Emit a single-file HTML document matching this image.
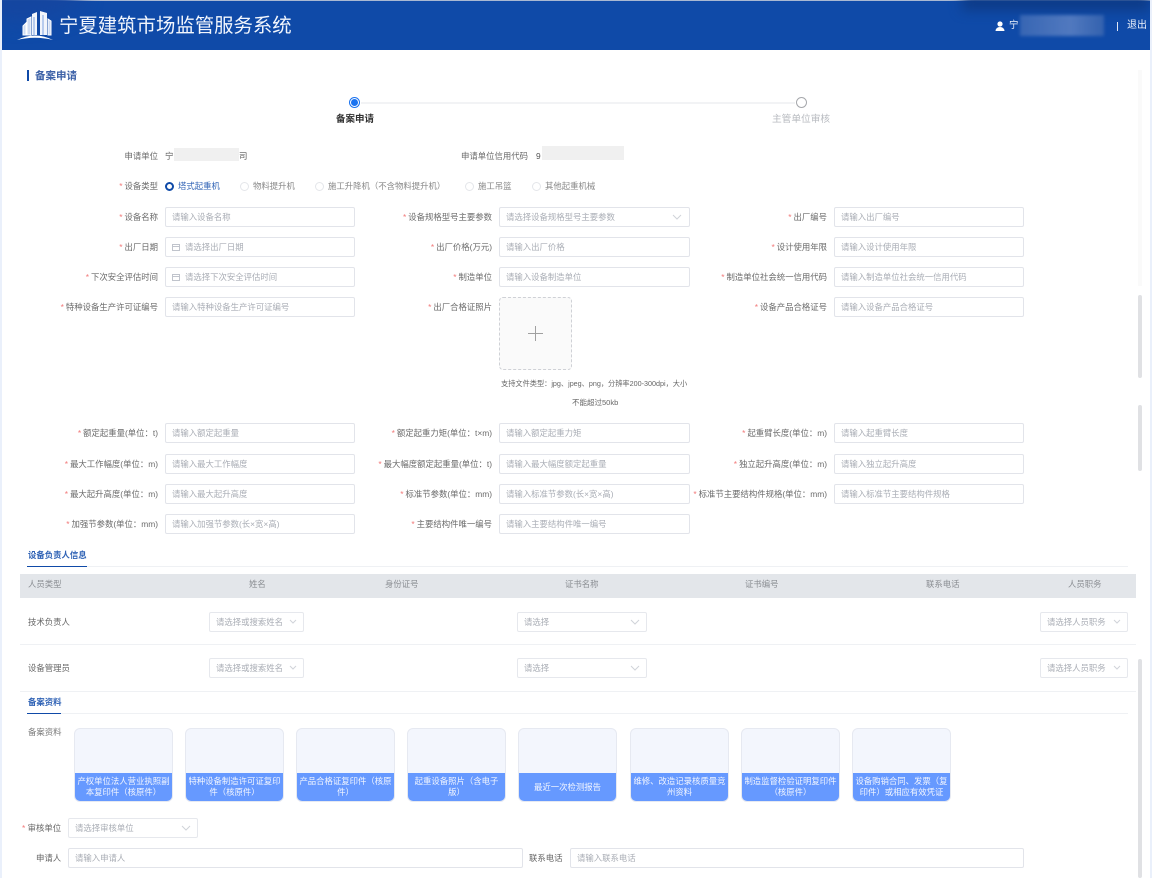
<!DOCTYPE html>
<html lang="zh"><head><meta charset="utf-8"><title>备案申请</title>
<style>
*{box-sizing:border-box}
html,body{margin:0;padding:0;width:1152px;height:878px;overflow:hidden;background:#fff}
body{position:relative;font-family:"Liberation Sans","Noto Sans CJK SC",sans-serif;font-size:8.4px;color:#666;filter:blur(.35px)}
.a{position:absolute;white-space:nowrap;line-height:12px}
.l{position:absolute;white-space:nowrap;text-align:right;width:220px;line-height:20px;color:#6a6a6a}
.l1{left:-62px}.l2{left:272px}.l3{left:607px}
.l i{font-style:normal;color:#f27a7a;margin-right:2px}
.f{position:absolute;height:20px;border:1px solid #e2e4ea;border-radius:2px;background:#fff;color:#a9adb5;line-height:18px;padding-left:6px;white-space:nowrap;overflow:hidden}
.c1{left:165px;width:190px}.c2{left:499px;width:191px}.c3{left:834px;width:190px}
.d{padding-left:19px}
.d svg{position:absolute;left:6px;top:5px}
.sel{position:absolute;height:20px;border:1px solid #e6e8ed;border-radius:2px;background:#fff;color:#a9adb5;line-height:18px;padding-left:6px;white-space:nowrap}
.sel svg{position:absolute;right:6px;top:6px}
.hr{position:absolute;height:1px;background:#eff1f4}
.card{position:absolute;top:728px;width:99px;height:74px;border:1px solid #e6e9f1;border-radius:6px;background:#f3f6fd;overflow:hidden}
.card div{position:absolute;left:0;right:0;bottom:0;height:28px;background:#6699ff;color:#f3f6ff;font-size:8.4px;line-height:10.5px;text-align:center;padding:3px 2px 0}
.card div.one{padding-top:8.5px}
.r{position:absolute;width:9px;height:9px;border:1px solid #e4e6ea;border-radius:50%;top:182px;background:#fff}
.sb{position:absolute;left:1138px;width:4px;background:#e0e1e4;border-radius:2px}
.th{position:absolute;top:578px;line-height:12px;color:#8a8d92;text-align:center;white-space:nowrap}
</style></head><body>
<div style="position:absolute;left:0;top:0;width:2px;height:878px;background:#eaf0fb"></div>
<div style="position:absolute;left:1150px;top:0;width:2px;height:878px;background:#eaf0fb"></div>
<div style="position:absolute;left:2px;top:0;width:1148px;height:50px;background:#0f4aa8;overflow:hidden">
  <div style="position:absolute;left:0;top:0;right:0;height:1px;background:#a9b8d2"></div>
  <div style="position:absolute;left:-40px;top:-30px;width:120px;height:50px;background:#1546a0;border-radius:50%;filter:blur(10px)"></div>
  <div style="position:absolute;left:960px;top:-6px;width:188px;height:16px;background:#0d3a85;filter:blur(6px)"></div>
  <svg style="position:absolute;left:14px;top:9px" width="42" height="34" viewBox="0 0 42 34">
    <path d="M16 5 l5-2 v23 h-5z M24 2 l7 2 v22 h-7z" fill="#fff" opacity=".95"/>
    <path d="M11 10 l4-2 v18 h-4z M32 10 l3 2 v14 h-3z M7 17 l3-3 v12 h-3z" fill="#cfdcf3" stroke="#fff" stroke-width="1"/>
    <path d="M18 8v18M27 6v20" stroke="#7fa3e0" stroke-width="1"/>
    <path d="M1 31 Q19 22 37 31 Q19 26.5 1 31z" fill="#fff"/>
  </svg>
  <div class="a" style="left:57px;top:14px;font-size:19.4px;line-height:24px;color:#f2f6fd">宁夏建筑市场监管服务系统</div>
  <svg style="position:absolute;left:993px;top:21px" width="10" height="10" viewBox="0 0 10 10"><circle cx="5" cy="3" r="2.6" fill="#fff"/><path d="M0.5 10 Q1 6 5 6 Q9 6 9.500 10z" fill="#fff"/></svg>
  <div class="a" style="left:1007px;top:20px;color:#eef3fc;font-size:9.500px">宁</div>
  <div style="position:absolute;left:1018px;top:15px;width:84px;height:21px;background:linear-gradient(90deg,#3f6bb6,#5d82c4 60%,#3a66b0);opacity:.85;filter:blur(1.500px)"></div>
  <div style="position:absolute;left:1115px;top:22px;width:1px;height:9px;background:#dfe7f5"></div>
  <div class="a" style="left:1125px;top:20px;color:#eef3fc;font-size:10px">退出</div>
</div>

<div style="position:absolute;left:27px;top:70px;width:2px;height:11px;background:#0f4aa8"></div>
<div class="a" style="left:35px;top:70px;font-size:10.500px;font-weight:bold;color:#3d62a8">备案申请</div>

<div style="position:absolute;left:349px;top:97px;width:11px;height:11px;border-radius:50%;border:1px solid #1a73f0;background:#fff"></div>
<div style="position:absolute;left:351px;top:99px;width:7px;height:7px;border-radius:50%;background:#1a73f0"></div>
<div style="position:absolute;left:361px;top:102px;width:434px;height:2px;background:#f2f3f5"></div>
<div style="position:absolute;left:796px;top:97px;width:11px;height:11px;border-radius:50%;border:1px solid #a6a8ac;background:#fff"></div>
<div class="a" style="left:336px;top:114px;font-size:9.500px;color:#333;font-weight:bold">备案申请</div>
<div class="a" style="left:772px;top:114px;font-size:9.700px;color:#b8bbc0">主管单位审核</div>

<div class="l l1" style="top:146px">申请单位</div>
<div class="a" style="left:165px;top:150px;color:#555">宁</div>
<div style="position:absolute;left:174px;top:148px;width:65px;height:13px;background:#f0f0f0"></div>
<div class="a" style="left:239px;top:150px;color:#555">司</div>
<div class="l" style="left:308px;top:146px">申请单位信用代码</div>
<div class="a" style="left:536px;top:150px;color:#555">9</div>
<div style="position:absolute;left:542px;top:146px;width:82px;height:14px;background:#f0f0f0"></div>

<div class="l l1" style="top:176px"><i>*</i>设备类型</div>
<div style="position:absolute;left:165px;top:182px;width:9px;height:9px;border-radius:50%;border:2.500px solid #0f4aa8;background:#fff"></div>
<div class="a" style="left:178px;top:180px;color:#2f62b5">塔式起重机</div>
<div class="r" style="left:240px"></div><div class="a" style="left:253px;top:180px;color:#888">物料提升机</div>
<div class="r" style="left:315px"></div><div class="a" style="left:328px;top:180px;color:#888">施工升降机（不含物料提升机）</div>
<div class="r" style="left:465px"></div><div class="a" style="left:478px;top:180px;color:#888">施工吊篮</div>
<div class="r" style="left:532px"></div><div class="a" style="left:545px;top:180px;color:#888">其他起重机械</div>

<div class="l l1" style="top:207px"><i>*</i>设备名称</div><div class="f c1" style="top:207px">请输入设备名称</div>
<div class="l l2" style="top:207px"><i>*</i>设备规格型号主要参数</div>
<div class="f c2" style="top:207px">请选择设备规格型号主要参数<svg style="position:absolute;right:7px;top:6px" width="10" height="6" viewBox="0 0 10 6"><path d="M1 1l4 4 4-4" fill="none" stroke="#d0d3d9"/></svg></div>
<div class="l l3" style="top:207px"><i>*</i>出厂编号</div><div class="f c3" style="top:207px">请输入出厂编号</div>

<div class="l l1" style="top:237px"><i>*</i>出厂日期</div>
<div class="f c1 d" style="top:237px"><svg width="8" height="8" viewBox="0 0 8 8"><path d="M.5 1.500h7v6h-7zM.5 3.500h7" fill="none" stroke="#c0c4cc"/></svg>请选择出厂日期</div>
<div class="l l2" style="top:237px"><i>*</i>出厂价格(万元)</div><div class="f c2" style="top:237px">请输入出厂价格</div>
<div class="l l3" style="top:237px"><i>*</i>设计使用年限</div><div class="f c3" style="top:237px">请输入设计使用年限</div>

<div class="l l1" style="top:267px"><i>*</i>下次安全评估时间</div>
<div class="f c1 d" style="top:267px"><svg width="8" height="8" viewBox="0 0 8 8"><path d="M.5 1.500h7v6h-7zM.5 3.500h7" fill="none" stroke="#c0c4cc"/></svg>请选择下次安全评估时间</div>
<div class="l l2" style="top:267px"><i>*</i>制造单位</div><div class="f c2" style="top:267px">请输入设备制造单位</div>
<div class="l l3" style="top:267px"><i>*</i>制造单位社会统一信用代码</div><div class="f c3" style="top:267px">请输入制造单位社会统一信用代码</div>

<div class="l l1" style="top:297px"><i>*</i>特种设备生产许可证编号</div><div class="f c1" style="top:297px">请输入特种设备生产许可证编号</div>
<div class="l l2" style="top:297px"><i>*</i>出厂合格证照片</div>
<div style="position:absolute;left:499px;top:297px;width:73px;height:73px;border:1px dashed #cfd1d6;border-radius:4px;background:#fafafa"></div>
<svg style="position:absolute;left:528px;top:326px" width="15" height="15" viewBox="0 0 15 15"><path d="M7.500 0v15M0 7.500h15" stroke="#a0a0a0" stroke-width="1"/></svg>
<div class="a" style="left:501px;top:378px;font-size:7.200px;color:#666">支持文件类型：jpg、jpeg、png，分辨率200-300dpi，大小</div>
<div class="a" style="left:572px;top:397px;font-size:7.500px;color:#666">不能超过50kb</div>
<div class="l l3" style="top:297px"><i>*</i>设备产品合格证号</div><div class="f c3" style="top:297px">请输入设备产品合格证号</div>

<div class="l l1" style="top:423px"><i>*</i>额定起重量(单位：t)</div><div class="f c1" style="top:423px">请输入额定起重量</div>
<div class="l l2" style="top:423px"><i>*</i>额定起重力矩(单位：t×m)</div><div class="f c2" style="top:423px">请输入额定起重力矩</div>
<div class="l l3" style="top:423px"><i>*</i>起重臂长度(单位：m)</div><div class="f c3" style="top:423px">请输入起重臂长度</div>

<div class="l l1" style="top:454px"><i>*</i>最大工作幅度(单位：m)</div><div class="f c1" style="top:454px">请输入最大工作幅度</div>
<div class="l l2" style="top:454px"><i>*</i>最大幅度额定起重量(单位：t)</div><div class="f c2" style="top:454px">请输入最大幅度额定起重量</div>
<div class="l l3" style="top:454px"><i>*</i>独立起升高度(单位：m)</div><div class="f c3" style="top:454px">请输入独立起升高度</div>

<div class="l l1" style="top:484px"><i>*</i>最大起升高度(单位：m)</div><div class="f c1" style="top:484px">请输入最大起升高度</div>
<div class="l l2" style="top:484px"><i>*</i>标准节参数(单位：mm)</div><div class="f c2" style="top:484px">请输入标准节参数(长×宽×高)</div>
<div class="l l3" style="top:484px"><i>*</i>标准节主要结构件规格(单位：mm)</div><div class="f c3" style="top:484px">请输入标准节主要结构件规格</div>

<div class="l l1" style="top:514px"><i>*</i>加强节参数(单位：mm)</div><div class="f c1" style="top:514px">请输入加强节参数(长×宽×高)</div>
<div class="l l2" style="top:514px"><i>*</i>主要结构件唯一编号</div><div class="f c2" style="top:514px">请输入主要结构件唯一编号</div>

<div class="a" style="left:28px;top:549px;color:#2f62b5;font-weight:bold">设备负责人信息</div>
<div class="hr" style="left:27px;top:566px;width:1101px"></div>
<div style="position:absolute;left:27px;top:566px;width:60px;height:1px;background:#0f4aa8"></div>

<div style="position:absolute;left:20px;top:574px;width:1116px;height:24px;background:#e3e6ea"></div>
<div class="th" style="left:28px">人员类型</div>
<div class="th" style="left:249px">姓名</div>
<div class="th" style="left:385px">身份证号</div>
<div class="th" style="left:565px">证书名称</div>
<div class="th" style="left:745px">证书编号</div>
<div class="th" style="left:926px">联系电话</div>
<div class="th" style="left:1068px">人员职务</div>

<div class="a" style="left:28px;top:616px;color:#666">技术负责人</div>
<div class="sel" style="left:209px;top:612px;width:95px">请选择或搜索姓名<svg width="8" height="6" viewBox="0 0 8 6"><path d="M1 1l3 3 3-3" fill="none" stroke="#d0d3d9"/></svg></div>
<div class="sel" style="left:517px;top:612px;width:130px">请选择<svg width="10" height="6" viewBox="0 0 10 6"><path d="M1 1l4 4 4-4" fill="none" stroke="#d0d3d9"/></svg></div>
<div class="sel" style="left:1040px;top:612px;width:88px">请选择人员职务<svg width="8" height="6" viewBox="0 0 8 6"><path d="M1 1l3 3 3-3" fill="none" stroke="#d0d3d9"/></svg></div>
<div class="hr" style="left:20px;top:644px;width:1116px"></div>

<div class="a" style="left:28px;top:662px;color:#666">设备管理员</div>
<div class="sel" style="left:209px;top:658px;width:95px">请选择或搜索姓名<svg width="8" height="6" viewBox="0 0 8 6"><path d="M1 1l3 3 3-3" fill="none" stroke="#d0d3d9"/></svg></div>
<div class="sel" style="left:517px;top:658px;width:130px">请选择<svg width="10" height="6" viewBox="0 0 10 6"><path d="M1 1l4 4 4-4" fill="none" stroke="#d0d3d9"/></svg></div>
<div class="sel" style="left:1040px;top:658px;width:88px">请选择人员职务<svg width="8" height="6" viewBox="0 0 8 6"><path d="M1 1l3 3 3-3" fill="none" stroke="#d0d3d9"/></svg></div>
<div class="hr" style="left:20px;top:691px;width:1116px"></div>

<div class="a" style="left:28px;top:696px;color:#2f62b5;font-weight:bold">备案资料</div>
<div class="hr" style="left:27px;top:713px;width:1101px"></div>
<div style="position:absolute;left:27px;top:713px;width:34px;height:1px;background:#0f4aa8"></div>

<div class="a" style="left:28px;top:726px;color:#777">备案资料</div>
<div class="card" style="left:74px"><div>产权单位法人营业执照副本复印件（核原件）</div></div>
<div class="card" style="left:185px"><div>特种设备制造许可证复印件（核原件）</div></div>
<div class="card" style="left:296px"><div>产品合格证复印件（核原件）</div></div>
<div class="card" style="left:407px"><div>起重设备照片（含电子版）</div></div>
<div class="card" style="left:518px"><div class="one">最近一次检测报告</div></div>
<div class="card" style="left:630px"><div>维修、改造记录核质量竞州资料</div></div>
<div class="card" style="left:741px"><div>制造监督检验证明复印件（核原件）</div></div>
<div class="card" style="left:852px"><div>设备购销合同、发票（复印件）或相应有效凭证</div></div>

<div class="a" style="left:22px;top:822px;color:#666"><span style="color:#f27a7a">*</span> 审核单位</div>
<div class="sel" style="left:68px;top:818px;width:130px">请选择审核单位<svg width="10" height="6" viewBox="0 0 10 6"><path d="M1 1l4 4 4-4" fill="none" stroke="#d0d3d9"/></svg></div>
<div class="a" style="left:36px;top:852px;color:#666;font-size:8.4px">申请人</div>
<div class="f" style="left:68px;top:848px;width:455px">请输入申请人</div>
<div class="a" style="left:529px;top:852px;color:#666">联系电话</div>
<div class="f" style="left:570px;top:848px;width:454px">请输入联系电话</div>

<div style="position:absolute;left:1138px;top:70px;width:4px;height:216px;background:#fafafa"></div>
<div class="sb" style="top:295px;height:83px"></div>
<div class="sb" style="top:405px;height:66px"></div>
<div class="sb" style="top:659px;height:219px"></div>
</body></html>
